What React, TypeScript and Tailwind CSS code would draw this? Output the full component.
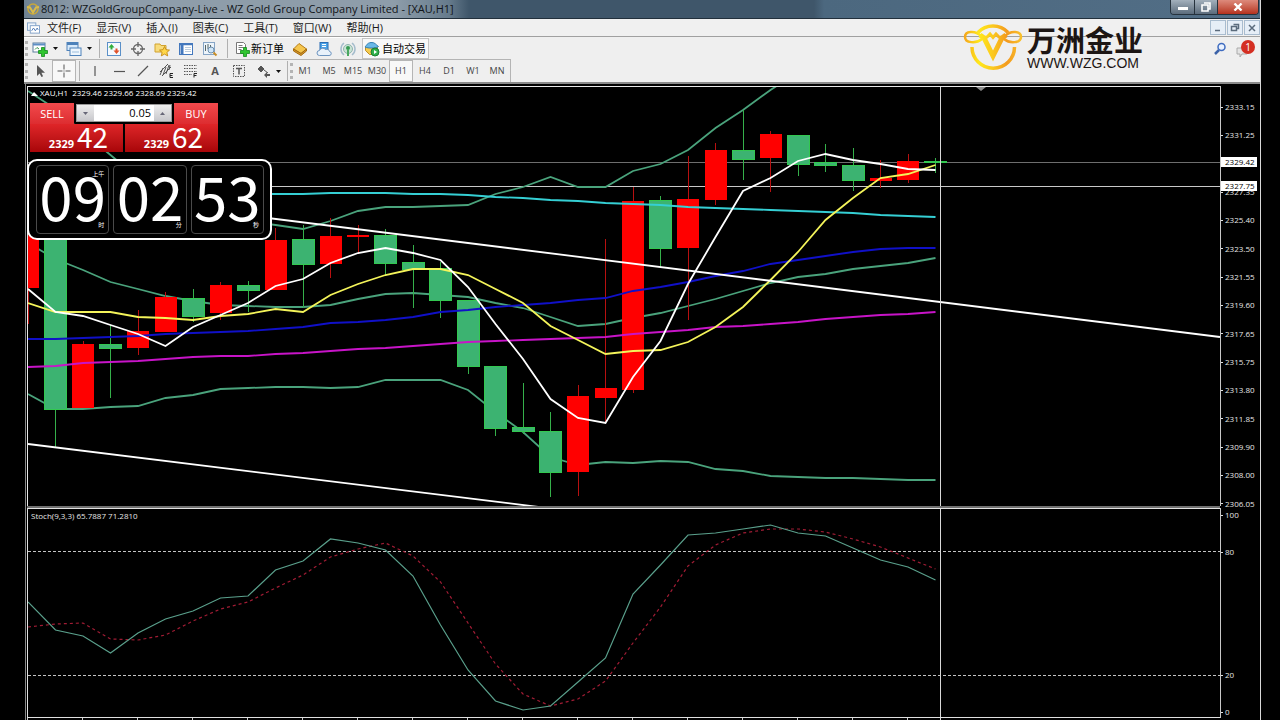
import type { ReactNode } from "react";

type Candle = {
  high: number;
  top: number;
  bottom: number;
  low: number;
  up: boolean;
};

// distance between two bars on the time axis
const STEP = 27.5;

const c = (
  high: number,
  top: number,
  bottom: number,
  low: number,
  up: boolean,
): Candle => ({ high, top, bottom, low, up });

const candles: Candle[] = [
  c(225, 236, 288, 324, true),
  c(225, 230, 409, 447, false),
  c(341, 344, 408, 408, true),
  c(325, 344, 348, 398, false),
  c(310, 331, 348, 355, true),
  c(292, 297, 332, 332, true),
  c(289, 298, 316, 322, false),
  c(282, 285, 313, 320, true),
  c(281, 285, 290, 312, false),
  c(228, 240, 290, 290, true),
  c(225, 239, 264, 308, false),
  c(218, 236, 264, 278, true),
  c(225, 235, 237, 254, true),
  c(229, 235, 263, 275, false),
  c(245, 262, 269, 308, false),
  c(262, 268, 300, 318, false),
  c(300, 300, 366, 374, false),
  c(366, 366, 428, 436, false),
  c(383, 427, 431, 434, false),
  c(412, 431, 472, 497, false),
  c(385, 396, 472, 496, true),
  c(239, 388, 398, 422, true),
  c(187, 201, 390, 393, true),
  c(196, 200, 248, 267, false),
  c(156, 199, 248, 320, true),
  c(143, 150, 200, 205, true),
  c(110, 150, 159, 180, false),
  c(131, 134, 158, 192, true),
  c(135, 135, 164, 176, false),
  c(144, 162, 165, 172, false),
  c(148, 165, 180, 191, false),
  c(160, 178, 181, 188, true),
  c(154, 161, 180, 183, true),
  c(158, 161, 162, 173, false),
];

const bandUpper = [
  91, 109, 132, 155, 178, 195, 208, 216, 221, 225, 229, 221, 211, 207, 207, 206,
  205, 194, 187, 177, 187, 187, 171, 164, 150, 128, 110, 90, 72,
];
const bandMiddle = [
  243, 259, 270, 282, 289, 296, 301, 305, 306, 307, 307, 305, 299, 294, 293,
  295, 297, 303, 308, 317, 326, 324, 318, 313, 306, 299, 291, 283, 277, 274,
  269, 266, 263, 258,
];
const bandLower = [
  394, 409, 409, 407, 406, 398, 395, 389, 388, 387, 387, 388, 387, 380, 380,
  380, 390, 412, 432, 457, 465, 462, 463, 461, 462, 469, 471, 476, 477, 478,
  478, 479, 480, 480,
];
const maWhite = [
  289, 312, 316, 325, 334, 346, 327, 315, 303, 286, 279, 263, 253, 248, 253,
  260, 287, 324, 359, 399, 418, 423, 377, 341, 284, 237, 191, 178, 161, 154,
  160, 164, 169, 170,
];
const maYellow = [
  303, 312, 312, 312, 317, 318, 320, 316, 314, 309, 312, 295, 284, 275, 269,
  269, 275, 289, 303, 326, 340, 354, 351, 350, 342, 327, 307, 280, 252, 220,
  198, 178, 174, 165,
];
const maBlue = [
  339, 339, 338, 337, 336, 334, 333, 332, 331, 329, 327, 323, 322, 320, 317,
  312, 310, 307, 305, 303, 300, 298, 291, 287, 282, 276, 271, 264, 260, 256,
  252, 249, 248, 248,
];
const maMagenta = [
  367, 366, 363, 362, 361, 359, 357, 356, 356, 354, 353, 351, 349, 348, 346,
  344, 342, 341, 340, 339, 338, 337, 334, 332, 330, 327, 326, 324, 322, 319,
  317, 315, 314, 312,
];
const maCyan = [
  196, 196, 196, 195, 195, 195, 195, 194, 194, 194, 194, 193, 193, 193, 194,
  194, 195, 197, 198, 200, 201, 203, 204, 205, 207, 208, 209, 210, 211, 212,
  213, 215, 216, 217,
];
const stochMain = [
  602, 630, 636, 653, 633, 619, 611, 598, 596, 570, 561, 539, 543, 550, 576,
  625, 670, 701, 710, 706, 682, 658, 594, 565, 535, 533, 529, 525, 533, 536,
  548, 560, 567, 580,
];
const stochSignal = [
  627, 624, 623, 639, 640, 635, 621, 609, 602, 588, 575, 557, 549, 543, 556,
  582, 623, 664, 694, 706, 699, 681, 643, 607, 566, 545, 533, 529, 529, 532,
  539, 547, 558, 569,
];

const prices = [
  "2333.15",
  "2331.25",
  "2329.30",
  "2327.35",
  "2325.40",
  "2323.50",
  "2321.55",
  "2319.60",
  "2317.65",
  "2315.75",
  "2313.80",
  "2311.85",
  "2309.90",
  "2308.00",
  "2306.05",
];

const menus = [
  "文件(F)",
  "显示(V)",
  "插入(I)",
  "图表(C)",
  "工具(T)",
  "窗口(W)",
  "帮助(H)",
];

const periods = ["M1", "M5", "M15", "M30", "H1", "H4", "D1", "W1", "MN"];

const points = (ys: number[]) => ys.map((y, i) => `${i * STEP},${y}`).join(" ");

function Line({
  ys,
  color,
  width = 1.8,
  dash,
}: {
  ys: number[];
  color: string;
  width?: number;
  dash?: string;
}) {
  return (
    <polyline
      points={points(ys)}
      fill="none"
      stroke={color}
      strokeWidth={width}
      strokeDasharray={dash}
    />
  );
}

function Icon({ children }: { children: ReactNode }) {
  return (
    <svg viewBox="0 0 16 16" className="size-4 shrink-0" aria-hidden="true">
      {children}
    </svg>
  );
}

function Caret() {
  return (
    <svg viewBox="0 0 5 3" className="h-[3px] w-[5px] shrink-0" aria-hidden="true">
      <path d="M0 0h5L2.5 3z" fill="#111" />
    </svg>
  );
}

function Grip() {
  return (
    <div className="my-[3px] ml-px w-[3px] border-l-[3px] border-dotted border-[#b4b4b4]" />
  );
}

function Separator() {
  return <div className="my-px w-px bg-[#b0b0b0]" />;
}

function Tool({
  label,
  active,
  children,
}: {
  label: string;
  active?: boolean;
  children: ReactNode;
}) {
  return (
    <button
      aria-label={label}
      className={
        active
          ? "flex w-6 items-center justify-center border border-[#b5b5b5] bg-[#f8f8f8]"
          : "flex w-6 items-center justify-center"
      }
    >
      {children}
    </button>
  );
}

const plus = (
  <path
    d="M9.5 6.5h3v3h3v3h-3v3h-3v-3h-3v-3h3z"
    fill="#2fc52f"
    stroke="#138a1c"
    strokeWidth=".8"
  />
);

function TitleBar() {
  return (
    <header className="flex h-[19px] items-start border-b border-[#22303c] bg-[linear-gradient(90deg,#6f8292_0,#8e9daa_60px,#8e9daa_370px,#667b8c_425px,#3f566a_445px,#3f566a_790px,#4c687f_800px,#526e86_100%)]">
      <div className="flex h-[17px] flex-1 items-center gap-px pl-[2px]">
        <svg viewBox="0 0 14 14" className="size-[14px]" aria-hidden="true">
          <circle cx="7" cy="7" r="5" fill="none" stroke="#c9a83a" strokeWidth="1.5" />
          <path d="M1 5l3 .5 3 5 3-5 3-.5" fill="none" stroke="#d9bb4a" strokeWidth="2" />
        </svg>
        <h1 className="text-[11px] leading-4 whitespace-nowrap text-[#101418]">
          8012: WZGoldGroupCompany-Live - WZ Gold Group Company Limited - [XAU,H1]
        </h1>
      </div>
      <div className="mr-px flex h-[15px] overflow-hidden rounded-b-sm border border-t-0 border-[#26323d] text-white">
        <button
          aria-label="最小化"
          className="flex w-6 items-end justify-center border-r border-[#26323d] bg-linear-to-b from-[#a3b0bc] to-[#5c6c7c] pb-1"
        >
          <span className="h-[3px] w-[10px] bg-white" />
        </button>
        <button
          aria-label="还原"
          className="flex w-[23px] items-center justify-center border-r border-[#26323d] bg-linear-to-b from-[#a3b0bc] to-[#5c6c7c]"
        >
          <svg viewBox="0 0 10 10" className="size-[10px]" aria-hidden="true">
            <path d="M3 1h6v6H7M1 3h6v6H1z" fill="none" stroke="#fff" strokeWidth="1.6" />
          </svg>
        </button>
        <button
          aria-label="关闭"
          className="flex w-10 items-center justify-center bg-linear-to-b from-[#dd8a7c] to-[#b5301c]"
        >
          <svg viewBox="0 0 10 8" className="h-2 w-[10px]" aria-hidden="true">
            <path d="M1.5.5l7 7M8.500.5l-7 7" stroke="#fff" strokeWidth="2.4" />
          </svg>
        </button>
      </div>
    </header>
  );
}

function MenuBar() {
  return (
    <nav className="flex h-[18px] items-center border-b border-[#a0a0a0] bg-[#f0f0f0]">
      <div className="flex flex-1 items-center gap-[15px] pl-[3px]">
        <svg viewBox="0 0 14 12" className="-mr-2 h-3 w-[13px]" aria-hidden="true">
          <rect x=".5" y=".5" width="9" height="8" fill="#eef4fb" stroke="#7fa0c8" />
          <rect x="3.500" y="3.500" width="10" height="8" fill="#fff" stroke="#7fa0c8" />
          <path d="M5 9l2-3 2 3 2-3 1 2" fill="none" stroke="#4d79b5" />
        </svg>
        {menus.map((m) => (
          <button key={m} className="text-[11px] leading-4 whitespace-nowrap text-[#1a1a1a]">
            {m}
          </button>
        ))}
      </div>
      <div className="flex h-[15px] gap-px">
        {[
          ["最小化图表", "M4 9.500h5"],
          ["还原图表", "M5.500 3.500h5v4h-2M3.500 5.500h5v4h-5z"],
          ["关闭图表", "M4 4l6 6M10 4l-6 6"],
        ].map(([label, d]) => (
          <button key={label} aria-label={label} className="w-4 border border-[#a9bccf] bg-[#e6eef7]">
            <svg viewBox="0 0 14 13" className="h-[13px] w-[14px]" aria-hidden="true">
              <path d={d} fill="none" stroke="#5b6b7c" strokeWidth="1.5" />
            </svg>
          </button>
        ))}
      </div>
    </nav>
  );
}

function MainToolbar() {
  return (
    <div className="flex h-[22px] w-[406px] border-t border-white">
      <Grip />
      <button aria-label="新图表" className="flex w-[34px] items-center justify-center gap-[5px]">
        <Icon>
          <rect x="1" y="2" width="12" height="9" fill="#fff" stroke="#5d7f9e" />
          <path d="M1 3.500h12" stroke="#5d8ec4" strokeWidth="2" />
          <path d="M3 8.500l2-2 2 1.500" fill="none" stroke="#3c9a4c" />
          {plus}
        </Icon>
        <Caret />
      </button>
      <button aria-label="配置文件" className="flex w-[34px] items-center justify-center gap-[5px]">
        <Icon>
          <rect x="1" y="1.500" width="11" height="8" fill="#d9eafa" stroke="#4e82ba" />
          <path d="M1 3h11" stroke="#4e82ba" strokeWidth="2" />
          <rect x="4" y="7" width="11" height="7.500" fill="#eef6fd" stroke="#4e82ba" />
          <path d="M6 11h7" stroke="#9dbedd" />
        </Icon>
        <Caret />
      </button>
      <div className="flex w-[6px] justify-center">
        <Separator />
      </div>
      <Tool label="市场报价">
        <Icon>
          <rect x="1.500" y="1.500" width="13" height="13" fill="#f4f9fe" stroke="#5b90c8" />
          <path d="M5.500 3L8.500 6.500h-2v2h-2v-2h-2z" fill="#2fae3b" />
          <path d="M10.500 13L7.500 9.500h2v-2h2v2h2z" fill="#e0522b" />
        </Icon>
      </Tool>
      <Tool label="数据窗口">
        <Icon>
          <circle cx="8" cy="8" r="4.500" fill="none" stroke="#666" strokeWidth="1.300" />
          <path d="M8 1v5M8 10v5M1 8h5M10 8h5" stroke="#666" strokeWidth="1.300" />
        </Icon>
      </Tool>
      <Tool label="导航">
        <Icon>
          <path d="M1 3h5l1 1.500h5V11H1z" fill="#f8dc7c" stroke="#d1a22e" />
          <path
            d="M10.500 5.500l1.500 3.200 3.500.4-2.600 2.300.8 3.500-3.200-1.800-3.200 1.800.8-3.500L5.500 9.100l3.500-.4z"
            fill="#ffd84a"
            stroke="#c48a14"
            strokeWidth=".9"
          />
        </Icon>
      </Tool>
      <Tool label="终端">
        <Icon>
          <rect x="1.500" y="2.500" width="13" height="11" fill="#fff" stroke="#4478bd" />
          <path d="M1.500 3.500h13" stroke="#4478bd" strokeWidth="1.500" />
          <path d="M4 4v9" stroke="#4478bd" strokeWidth="3" />
          <path d="M7 6.500h6M7 8.500h6M7 10.500h6" stroke="#bcd" />
        </Icon>
      </Tool>
      <Tool label="策略测试">
        <Icon>
          <rect x="1.500" y="1.500" width="11" height="12" fill="#edf4fa" stroke="#86a5c6" />
          <path d="M3.500 10V4M6 8V3M8.500 9V4" stroke="#566" />
          <circle cx="9" cy="9" r="3" fill="#cfe5f7" stroke="#6d8fae" />
          <path d="M11.500 11.500l3 3" stroke="#c98e28" strokeWidth="2" />
        </Icon>
      </Tool>
      <div className="flex w-[10px] justify-center">
        <Separator />
      </div>
      <button className="flex w-[56px] items-center gap-px pl-[2px] text-[11px] leading-4 whitespace-nowrap text-black">
        <Icon>
          <path d="M2.500 1.500h7l2 2v9h-9z" fill="#fff" stroke="#777" />
          <path d="M4.500 4.500h4M4.500 6.500h5M4.500 8.500h3" stroke="#777" />
          {plus}
        </Icon>
        新订单
      </button>
      <Tool label="MetaEditor">
        <Icon>
          <path d="M1.500 8L7 2.500l7.500 5.500L9 12.500z" fill="#f5c64e" stroke="#b57c17" />
          <path d="M1.500 8v2L9 14.500l5.500-4.500V8L9 12.500z" fill="#d6962a" stroke="#a36b10" />
        </Icon>
      </Tool>
      <Tool label="市场">
        <Icon>
          <rect x="4" y="1.500" width="8" height="7" fill="#4da3e8" stroke="#2b6cb4" />
          <path d="M6 3.500h4M6 5.500h4" stroke="#fff" />
          <path
            d="M3.500 14.500a2.500 2.500 0 010-5 3.500 3.500 0 016-1 3 3 0 014 2 2 2 0 01-.5 4z"
            fill="#e8f1fa"
            stroke="#6b93bf"
          />
        </Icon>
      </Tool>
      <Tool label="信号">
        <Icon>
          <path d="M4 2a7.500 7.500 0 000 12M12 2a7.500 7.500 0 010 12" fill="none" stroke="#a4bccc" strokeWidth="1.500" />
          <circle cx="8" cy="8" r="4.500" fill="#c9e3d4" stroke="#8fb4ae" />
          <circle cx="8" cy="7" r="2" fill="#379b52" />
          <path d="M8 8v7" stroke="#49a860" strokeWidth="2" />
        </Icon>
      </Tool>
      <div className="w-[2px]" />
      <button className="flex w-[67px] items-center gap-[2px] border border-[#c4c4c4] bg-[#f8f8f8] pl-px text-[11px] leading-4 whitespace-nowrap text-black">
        <Icon>
          <path d="M1.500 6h12v3.500l-3 4h-5l-4-4z" fill="#f5cb4f" stroke="#bd8d25" />
          <path d="M1 6c2-2 2-4 6-4.500S12 4 14.500 5.500C12 7.500 4 7.500 1 6z" fill="#69b8e8" stroke="#3580b3" />
          <circle cx="11" cy="11" r="4" fill="#2fb14a" stroke="#1d7d33" />
          <path d="M10 9l3 2-3 2z" fill="#fff" />
        </Icon>
        自动交易
      </button>
    </div>
  );
}

function LineToolbar() {
  const gray = "#555";
  return (
    <div className="flex h-[23px] w-[487px] border-t border-r border-[#b4b4b4]">
      <Grip />
      <Tool label="光标">
        <Icon>
          <path d="M5 2v11l2.600-2.500L9.500 14l1.600-.8-1.700-3.400H13z" fill={gray} />
        </Icon>
      </Tool>
      <Tool label="十字准线" active>
        <Icon>
          <path d="M8 1.500v5M8 9.500v5M1.500 8h5M9.500 8h5" stroke={gray} />
          <path d="M7.500 8h1" stroke={gray} />
        </Icon>
      </Tool>
      <div className="flex w-[7px] justify-center">
        <Separator />
      </div>
      <Tool label="垂直线">
        <Icon>
          <path d="M8 3v10" stroke={gray} strokeWidth="1.200" />
        </Icon>
      </Tool>
      <Tool label="水平线">
        <Icon>
          <path d="M3 8.500h11" stroke={gray} strokeWidth="1.200" />
        </Icon>
      </Tool>
      <Tool label="趋势线">
        <Icon>
          <path d="M3 13L13 3" stroke={gray} strokeWidth="1.200" />
        </Icon>
      </Tool>
      <Tool label="等距通道">
        <Icon>
          <path d="M1 9l8-8M3 13l9-9M1 12L4 5M4 12l3-8M7 11l3-9M10 7l1-5" stroke={gray} />
          <path d="M14 10.500h-3v4h3M11 12.500h2.500" fill="none" stroke="#222" />
        </Icon>
      </Tool>
      <Tool label="斐波那契">
        <Icon>
          <path d="M1 2.500h13M1 5.500h13M1 8.500h13M1 11.500h8" stroke={gray} strokeDasharray="1.500 1" />
          <path d="M14 10.500h-3v4M11 12.500h2.500" fill="none" stroke="#222" />
        </Icon>
      </Tool>
      <button className="w-6 text-[11px] leading-4 font-bold text-[#555]">A</button>
      <Tool label="文字标签">
        <Icon>
          <rect x="2.500" y="2.500" width="11" height="11" fill="none" stroke={gray} strokeDasharray="1.500 1" />
          <path d="M5 5.500h6M8 5.500v6" stroke={gray} strokeWidth="1.500" />
        </Icon>
      </Tool>
      <button aria-label="箭头" className="flex w-9 items-center gap-1 pl-[5px]">
        <Icon>
          <path d="M5 3l3 3-3 3-3-3zM8 7l4 3" fill={gray} stroke={gray} />
          <path d="M8 12l3-3v2h3v2h-3v2z" fill={gray} />
        </Icon>
        <Caret />
      </button>
      <Separator />
      <div className="flex pl-px">
        <Grip />
      </div>
      {periods.map((p) => (
        <button
          key={p}
          className={
            p === "H1"
              ? "w-6 border border-[#b5b5b5] bg-[#f8f8f8] text-[9px] leading-4 text-[#444]"
              : "w-6 text-[9px] leading-4 text-[#444]"
          }
        >
          {p}
        </button>
      ))}
    </div>
  );
}

function BrandLogo() {
  return (
    <div className="absolute top-1 right-[117px] flex items-center gap-1">
      <svg viewBox="0 0 60 48" className="h-12 w-[60px]" aria-hidden="true">
        <defs>
          <linearGradient id="gold" gradientUnits="userSpaceOnUse" x1="2" x2="58" y1="0" y2="0">
            <stop offset="0" stopColor="#f5a81c" />
            <stop offset=".25" stopColor="#ffe81a" />
            <stop offset=".5" stopColor="#fbc81e" />
            <stop offset=".75" stopColor="#f39a1e" />
            <stop offset="1" stopColor="#f9c02a" />
          </linearGradient>
        </defs>
        <g fill="none" stroke="url(#gold)">
          <path d="M15 9.500a20.500 20.500 0 0130 0" strokeWidth="3.500" />
          <path d="M9 24a21.200 21.200 0 1042.500 0" strokeWidth="3.500" />
          <path
            d="M19 16C13 21 2 20 2 14s10-7 16-1M41 16c6 5 17 4 17-2s-10-7-16-1"
            strokeWidth="2.500"
          />
          <path d="M17 12l4 3 9 18 9-18 4-3" strokeWidth="5" />
          <path d="M19 15l5-1 3-3 3 3.500 3-3.500 3 3 5 1" strokeWidth="3" />
        </g>
      </svg>
      <div className="flex flex-col text-[#1d1614]">
        <span className="text-[29px] leading-8 font-bold whitespace-nowrap">万洲金业</span>
        <span className="font-['Liberation_Sans',sans-serif] text-[14px] leading-3 whitespace-nowrap">
          WWW.WZG.COM
        </span>
      </div>
    </div>
  );
}

function HeaderActions() {
  return (
    <div className="flex h-6 items-center gap-2 pr-[5px]">
      <button aria-label="搜索">
        <svg viewBox="0 0 14 14" className="size-[14px]" aria-hidden="true">
          <path d="M6 8l-4 4" stroke="#3b62a8" strokeWidth="2.500" />
          <circle cx="8.500" cy="5" r="3.500" fill="#eaf2ff" stroke="#3f6cc0" strokeWidth="1.500" />
        </svg>
      </button>
      <button aria-label="通知" className="relative h-5 w-5">
        <svg viewBox="0 0 20 20" className="size-5" aria-hidden="true">
          <path d="M2 9h10v6H7l-2 3v-3H2z" fill="#e4e4e4" stroke="#aaa" />
        </svg>
        <span className="absolute top-px right-0 size-[14px] rounded-full bg-[#d42f22] text-center text-[10px] leading-[14px] text-white">
          1
        </span>
      </button>
    </div>
  );
}

function PriceChart() {
  return (
    <svg className="block h-[419px] w-full" role="img" aria-label="XAU,H1">
      <g transform="translate(0 -87)">
        <line x1="0" x2="100%" y1="162.500" y2="162.500" stroke="#6e6e6e" />
        <line x1="0" x2="100%" y1="186.500" y2="186.500" stroke="#c8c8c8" />
        <Line ys={bandUpper} color="#4aa37c" />
        <Line ys={bandMiddle} color="#4aa37c" />
        <Line ys={bandLower} color="#4aa37c" />
        {candles.map((k, i) => {
          const x = i * STEP;
          return (
            <g key={i} shapeRendering="crispEdges">
              <line
                x1={x}
                x2={x}
                y1={k.high}
                y2={k.low}
                stroke={k.up ? "#b81010" : "#35b04a"}
              />
              <rect
                x={x - 11}
                y={k.top}
                width="22"
                height={k.bottom - k.top}
                fill={k.up ? "#ff0000" : "#3cb371"}
                stroke={k.up ? "none" : "#32c850"}
              />
            </g>
          );
        })}
        <Line ys={maMagenta} color="#c814c8" />
        <Line ys={maBlue} color="#1010c8" />
        <Line ys={maCyan} color="#35cfd4" />
        <Line ys={maYellow} color="#f4f45a" />
        <Line ys={maWhite} color="#ffffff" />
        <line x1="0" y1="188" x2="1192" y2="337" stroke="#fff" strokeWidth="1.800" />
        <line x1="0" y1="444" x2="511" y2="507" stroke="#fff" strokeWidth="1.800" />
        <path d="M948 87h10l-5 4z" fill="#8c8c8c" />
        <path d="M3 96h7L6 92z" fill="#fff" />
        <line x1="912.500" x2="912.500" y1="87" y2="506" stroke="#d8d8d8" />
      </g>
    </svg>
  );
}

function StochChart() {
  return (
    <svg className="block h-[208px] w-full" role="img" aria-label="Stoch(9,3,3)">
      <g transform="translate(0 -509)">
        <line x1="0" x2="100%" y1="551.500" y2="551.500" stroke="#c4c4c4" strokeDasharray="3 2" />
        <line x1="0" x2="100%" y1="675.500" y2="675.500" stroke="#c4c4c4" strokeDasharray="3 2" />
        <Line ys={stochSignal} color="#a01c34" width={1.2} dash="3 3" />
        <Line ys={stochMain} color="#5aa08c" width={1.2} />
        <line x1="912.500" x2="912.500" y1="509" y2="717" stroke="#d8d8d8" />
      </g>
    </svg>
  );
}

function OneClickTrading() {
  return (
    <div className="absolute top-4 left-[2px] w-[188px] text-white">
      <div className="flex h-[21px] gap-[2px]">
        <button className="w-[44px] bg-linear-to-b from-[#f2494c] to-[#dd2c30] text-[11px] leading-5">
          SELL
        </button>
        <div className="my-px mb-[2px] flex flex-1 border border-[#999]">
          <button aria-label="减少手数" className="flex w-[17px] items-center justify-center bg-linear-to-b from-[#eee] to-[#c8c8cc]">
            <svg viewBox="0 0 5 3" className="h-[3px] w-[5px]" aria-hidden="true">
              <path d="M0 0h5L2.500 3z" fill="#667" />
            </svg>
          </button>
          <input
            aria-label="手数"
            defaultValue="0.05"
            className="w-0 flex-1 bg-white pr-[3px] text-right text-[11px] leading-4 text-black"
          />
          <button aria-label="增加手数" className="flex w-[17px] items-center justify-center bg-linear-to-b from-[#eee] to-[#c8c8cc]">
            <svg viewBox="0 0 5 3" className="h-[3px] w-[5px]" aria-hidden="true">
              <path d="M0 3h5L2.500 0z" fill="#667" />
            </svg>
          </button>
        </div>
        <button className="w-[44px] bg-linear-to-b from-[#f2494c] to-[#dd2c30] text-[11px] leading-5">
          BUY
        </button>
      </div>
      <div className="flex h-7 gap-[2px]">
        {["42", "62"].map((pips) => (
          <button
            key={pips}
            className="flex flex-1 items-baseline justify-center gap-[3px] bg-linear-to-b from-[#df2528] to-[#a80508] pb-1 pl-1"
          >
            <span className="text-[11px] leading-6 font-bold">2329</span>
            <span className="font-['Noto_Sans_CJK_SC',sans-serif] text-[28px] leading-6">{pips}</span>
          </button>
        ))}
      </div>
    </div>
  );
}

function ClockWidget() {
  const parts = [
    { value: "09", unit: "时", note: "上午" },
    { value: "02", unit: "分", note: "" },
    { value: "53", unit: "秒", note: "" },
  ];
  return (
    <div className="absolute top-[72px] -left-px flex h-[81px] w-[245px] gap-1 rounded-[10px] border-2 border-white bg-black py-1 pr-[6px] pl-[7px]">
      {parts.map((p) => (
        <div
          key={p.unit}
          className="relative flex flex-1 items-start justify-center rounded-sm border border-[#4a4a4a] pt-[7px] text-white"
        >
          <span className="font-['Noto_Sans_CJK_SC',sans-serif] text-[60px] leading-[44px]">
            {p.value}
          </span>
          {p.note && (
            <span className="absolute top-1 right-1 text-[6px] leading-2">{p.note}</span>
          )}
          <span className="absolute right-1 bottom-1 text-[6px] leading-2">{p.unit}</span>
        </div>
      ))}
    </div>
  );
}

function AxisLabel({ children }: { children: ReactNode }) {
  return (
    <div className="flex h-[10px] items-center gap-[2px] text-[8px] leading-[10px] text-[#e6e6e6]">
      <span className="h-px w-[2px] bg-[#ddd]" />
      {children}
    </div>
  );
}

export default function App() {
  return (
    <div className="min-h-screen overflow-hidden bg-black pr-[19px] pl-6 font-['Open_Sans','Noto_Sans_CJK_SC',sans-serif]">
      <div className="border-r border-[#d8d8d8]">
        <TitleBar />
        <div className="relative">
          <MenuBar />
          <div className="flex justify-between border-b-2 border-[#8a8a8a] bg-[#efefef]">
            <div>
              <MainToolbar />
              <LineToolbar />
            </div>
            <HeaderActions />
          </div>
          <BrandLogo />
        </div>
        <main className="ml-px border-l border-[#8a8a8a] pt-[2px] pl-px">
          <section className="flex h-[420px]">
            <div className="relative min-w-0 flex-1 border-t border-l border-[#e8e8e8]">
              <PriceChart />
              <p className="absolute top-px left-3 text-[8px] leading-[10px] whitespace-pre text-white">
                {"XAU,H1  2329.46 2329.66 2328.69 2329.42"}
              </p>
              <OneClickTrading />
              <ClockWidget />
            </div>
            <div className="relative w-10 border-l border-[#c8c8c8] pt-4">
              <div className="flex h-[407px] flex-col justify-between">
                {prices.map((p) => (
                  <AxisLabel key={p}>{p}</AxisLabel>
                ))}
              </div>
              <span className="absolute top-[71px] left-0 w-[36px] bg-white pl-1 text-[8px] leading-[10px] text-black">
                2329.42
              </span>
              <span className="absolute top-[95px] left-0 w-[36px] bg-white pl-1 text-[8px] leading-[10px] text-black">
                2327.75
              </span>
            </div>
          </section>
          <div className="mr-10 h-[2px] bg-[#707070]" />
          <section className="flex">
            <div className="relative min-w-0 flex-1 border-y border-l border-[#e0e0e0]">
              <StochChart />
              <p className="absolute top-[2px] left-[3px] text-[8px] leading-[10px] text-[#e6e6e6]">
                Stoch(9,3,3) 65.7887 71.2810
              </p>
            </div>
            <div className="flex w-10 flex-col border-l border-[#c8c8c8] pt-[2px]">
              <AxisLabel>100</AxisLabel>
              <div className="h-[27px]" />
              <AxisLabel>80</AxisLabel>
              <div className="h-[113px]" />
              <AxisLabel>20</AxisLabel>
              <div className="h-[27px]" />
              <AxisLabel>0</AxisLabel>
            </div>
          </section>
          <svg className="block h-[2px] w-full" aria-hidden="true">
            {Array.from({ length: 17 }, (_, i) => (
              <rect key={i} x={i * STEP * 2} width="1" height="2" fill="#c8c8c8" />
            ))}
            <rect x="913" width="1" height="2" fill="#d8d8d8" />
          </svg>
        </main>
      </div>
    </div>
  );
}
